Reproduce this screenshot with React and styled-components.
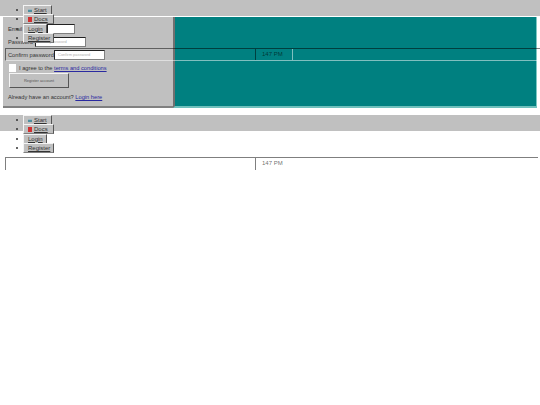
import React from 'react';
import styled, { createGlobalStyle } from 'styled-components';

const GlobalStyle = createGlobalStyle`
    html, body {
        margin: 0;
        padding: 0;
        background: #ffffff;
        font-family: "Liberation Sans", Arial, sans-serif;
        font-size: 6px;
        color: #333333;
    }
`;

const Page = styled.div`
    position: relative;
    width: 540px;
    height: 405px;
    overflow: hidden;
`;

const NavBar = styled.nav`
    position: relative;
    z-index: 2;
    height: 16px;
    background: #c0c0c0;
`;

const NavList = styled.ul`
    margin: 0;
    padding: ${(props) => props.$top}px 0 0 23px;
    list-style: none;
`;

const NavItem = styled.li`
    position: relative;
    height: 9.35px;

    &::before {
        content: "";
        position: absolute;
        left: -7px;
        top: 4px;
        width: 2px;
        height: 2px;
        border-radius: 50%;
        background: #333333;
    }
`;

const NavButton = styled.a`
    display: inline-flex;
    align-items: center;
    gap: 2px;
    box-sizing: border-box;
    height: 10px;
    width: ${(props) => props.$width}px;
    padding-left: 4px;
    background: #c0c0c0;
    border-top: 1px solid #f4f4f4;
    border-left: 1px solid #f4f4f4;
    border-right: 1px solid #555555;
    border-bottom: 1px solid #808080;
    color: #333333;
    text-decoration: underline;
    line-height: 8px;
`;

const Hero = styled.section`
    position: relative;
    display: flex;
    height: 92px;
    margin: 0 3px 7px;
    border-top: 1px solid #ffffff;
    box-sizing: border-box;
`;

const Form = styled.div`
    box-sizing: border-box;
    width: 170px;
    padding: 7px 0 0 5px;
    background: #c0c0c0;
    border-bottom: 2px solid #808080;
    font-size: 5.7px;
`;

const Field = styled.div`
    display: flex;
    align-items: center;
    height: 10px;
    margin-bottom: 3px;
`;

const FieldLabel = styled.label`
    white-space: nowrap;
    width: ${(props) => props.$width}px;
    flex: none;
`;

const TextInput = styled.div`
    box-sizing: border-box;
    width: ${(props) => props.$width}px;
    height: 10px;
    padding-left: 3px;
    background: #ffffff;
    border-top: 1px solid #222222;
    border-left: 1px solid #222222;
    border-right: 1px solid #808080;
    border-bottom: 1px solid #808080;
    color: #b0b0b0;
    font-size: 4px;
    line-height: 8px;
    white-space: nowrap;
    overflow: hidden;
`;

const Agree = styled.div`
    display: flex;
    align-items: center;
    gap: 3px;
    height: 8px;
    margin: 4px 0 1px 1px;
`;

const Checkbox = styled.span`
    width: 7px;
    height: 8px;
    background: #ffffff;
    flex: none;
`;

const TextLink = styled.a`
    color: #2a2aa0;
    text-decoration: underline;
`;

const SubmitButton = styled.div`
    box-sizing: border-box;
    width: 60px;
    height: 15px;
    margin-left: 1px;
    background: #c0c0c0;
    border-top: 1px solid #f4f4f4;
    border-left: 1px solid #f4f4f4;
    border-right: 1px solid #555555;
    border-bottom: 1px solid #555555;
    color: #555555;
    font-size: 4px;
    line-height: 13px;
    text-align: center;
`;

const SignIn = styled.p`
    margin: 5px 0 0;
    line-height: 8px;
`;

const Desktop = styled.div`
    flex: 1;
    background: #008080;
    border-left: 2px solid #707070;
    border-right: 1px solid #7fc8c4;
    border-bottom: 2px solid #6fc0bc;
`;

const Taskbar = styled.footer`
    position: ${(props) => (props.$over ? 'absolute' : 'relative')};
    z-index: 1;
    display: flex;
    box-sizing: border-box;
    height: 13px;
    border-top: 1px solid rgba(0, 0, 0, 0.5);
    border-left: 1px solid rgba(0, 0, 0, 0.5);
    ${(props) => (props.$over
        ? 'top: 31px; left: 2px; right: -3px; border-bottom: 1px solid rgba(255, 255, 255, 0.5);'
        : 'margin: 26px 2px 0 5px;')}
`;

const Clock = styled.div`
    box-sizing: border-box;
    width: 38px;
    margin-left: 249px;
    padding-left: 6px;
    border-left: 1px solid rgba(0, 0, 0, 0.5);
    border-right: 1px solid rgba(255, 255, 255, 0.5);
    color: rgba(0, 0, 0, 0.6);
    line-height: 11px;
`;

const StartIcon = () => (
    <svg width="4" height="3" viewBox="0 0 4 3">
        <rect width="4" height="3" fill="#4f8f9f" />
        <rect width="4" height="1" fill="#a0b8c0" />
    </svg>
);

const DocsIcon = () => (
    <svg width="4" height="5" viewBox="0 0 4 5">
        <rect width="4" height="5" fill="#d03030" />
    </svg>
);

const Nav = ({ top }) => (
    <NavBar>
        <NavList $top={top}>
            <NavItem><NavButton $width={29}><StartIcon />Start</NavButton></NavItem>
            <NavItem><NavButton $width={31}><DocsIcon />Docs</NavButton></NavItem>
            <NavItem><NavButton $width={24}>Login</NavButton></NavItem>
            <NavItem><NavButton $width={31}>Register</NavButton></NavItem>
        </NavList>
    </NavBar>
);

const App = () => (
    <Page>
        <GlobalStyle />
        <Nav top={5} />
        <Hero>
            <Form>
                <Field>
                    <FieldLabel $width={39}>Email</FieldLabel>
                    <TextInput $width={28} />
                </Field>
                <Field>
                    <FieldLabel $width={27}>Password</FieldLabel>
                    <TextInput $width={51}>Enter password</TextInput>
                </Field>
                <Field>
                    <FieldLabel $width={46}>Confirm password</FieldLabel>
                    <TextInput $width={51}>Confirm password</TextInput>
                </Field>
                <Agree>
                    <Checkbox />
                    <span>I agree to the <TextLink>terms and conditions</TextLink></span>
                </Agree>
                <SubmitButton>Register account</SubmitButton>
                <SignIn>Already have an account? <TextLink>Login here</TextLink></SignIn>
            </Form>
            <Desktop />
            <Taskbar $over>
                <Clock>147 PM</Clock>
            </Taskbar>
        </Hero>
        <Nav top={0} />
        <Taskbar>
            <Clock>147 PM</Clock>
        </Taskbar>
    </Page>
);

export default App;
